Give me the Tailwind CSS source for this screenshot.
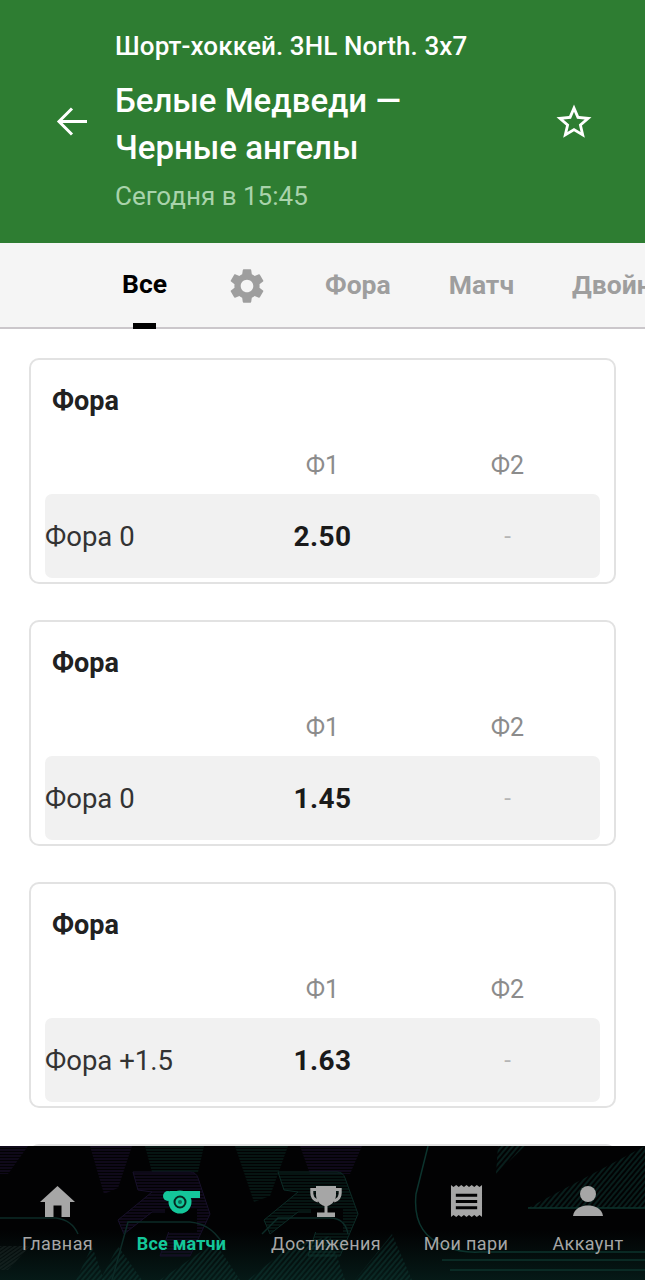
<!DOCTYPE html>
<html lang="ru">
<head>
<meta charset="UTF-8" />
<meta name="viewport" content="width=device-width, initial-scale=1.0" />
<title>Белые Медведи — Черные ангелы</title>
<script src="https://cdn.jsdelivr.net/npm/@tailwindcss/browser@4"></script>
</head>
<body class="bg-white font-['Roboto',sans-serif]">
<div class="w-[645px] h-[1280px] flex flex-col overflow-hidden">

  <!-- match header -->
  <header class="h-[243px] shrink-0 bg-[#2e7d32] flex items-center pl-[56px] pr-[50px]">
    <svg class="w-[31px] h-[29px] shrink-0" viewBox="0 0 31 29" fill="none" stroke="#fff" stroke-width="3"><path d="M31 14.500H3M16 1.500 3 14.500 16 27.500"/></svg>
    <div class="flex-1 pl-[28px] pb-[1px]">
      <div class="text-[26px] leading-[30px] font-medium text-white tracking-[0.1px]">Шорт-хоккей. 3HL North. 3x7</div>
      <div class="text-[33px] leading-[47px] font-medium text-white mt-[16px]">Белые Медведи —<br>Черные ангелы</div>
      <div class="text-[26px] leading-[30px] text-[#a9d3ab] mt-[10px]">Сегодня в 15:45</div>
    </div>
    <svg class="w-[42px] h-[42px] shrink-0" viewBox="0 0 24 24" fill="#fff"><path d="M22 9.240l-7.190-.62L12 2 9.190 8.630 2 9.240l5.460 4.730L5.820 21 12 17.270 18.180 21l-1.630-7.030L22 9.240zM12 15.400l-3.760 2.270 1-4.280-3.320-2.880 4.380-.38L12 6.100l1.710 4.040 4.380.38-3.320 2.880 1 4.280L12 15.400z"/></svg>
  </header>

  <!-- tabs -->
  <nav class="h-[86px] shrink-0 bg-[#f5f5f5] shadow-[inset_0_-2px_0_#cbc7cb] flex items-center pl-[122px] overflow-hidden whitespace-nowrap text-[26.5px] font-bold text-[#9e9e9e]">
    <div class="relative h-full flex items-center w-[46px] shrink-0 pb-[4px]">
      <span class="text-black">Все</span>
      <span class="absolute left-[11px] bottom-0 w-[23px] h-[6px] bg-black"></span>
    </div>
    <svg class="w-[42px] h-[42px] ml-[57.5px] shrink-0" viewBox="0 0 24 24" fill="#9e9e9e"><path d="M19.140 12.940c.04-.3.06-.61.06-.94 0-.32-.02-.64-.07-.94l2.030-1.580a.49.49 0 0 0 .12-.61l-1.920-3.320a.488.488 0 0 0-.59-.22l-2.390.96c-.5-.38-1.030-.7-1.620-.94l-.36-2.540a.484.484 0 0 0-.48-.41h-3.840c-.24 0-.43.17-.47.41l-.36 2.540c-.59.24-1.130.57-1.620.94l-2.390-.96c-.22-.08-.47 0-.59.22L2.740 8.870c-.12.21-.08.47.12.61l2.030 1.580c-.05.3-.09.63-.09.94s.02.64.07.94l-2.030 1.580a.49.49 0 0 0-.12.61l1.920 3.320c.12.22.37.29.59.22l2.390-.96c.5.38 1.030.7 1.620.94l.36 2.540c.05.24.24.41.48.41h3.840c.24 0 .44-.17.47-.41l.36-2.540c.59-.24 1.130-.56 1.620-.94l2.390.96c.22.08.47 0 .59-.22l1.920-3.320c.12-.22.07-.47-.12-.61l-2.010-1.580zM12 15.600c-1.980 0-3.600-1.620-3.600-3.600s1.620-3.600 3.600-3.600 3.600 1.620 3.600 3.600-1.620 3.600-3.600 3.600z"/></svg>
    <span class="ml-[57.5px] pb-[3px]">Фора</span>
    <span class="ml-[58px] pb-[3px]">Матч</span>
    <span class="ml-[58px] pb-[3px]">Двойной шанс</span>
  </nav>

  <!-- markets -->
  <main class="flex-1 overflow-hidden px-[29px] pt-[29px] flex flex-col gap-[36.5px]">
    <section class="shrink-0 h-[225.5px] border-2 border-[#e2e2e2] rounded-[10px] px-[14px] pt-[25px]">
      <h2 class="pl-[7px] text-[27px] leading-[32px] font-bold text-[#212121]">Фора</h2>
      <div class="grid grid-cols-[185px_185px_185px] mt-[30px] h-[32px] items-center text-[25px] text-[#8c8c8c] text-center"><span></span><span>Ф1</span><span>Ф2</span></div>
      <div class="grid grid-cols-[185px_185px_185px] mt-[15px] h-[84px] items-center bg-[#f1f1f1] rounded-[7px] text-center">
        <span class="text-left text-[27.5px] text-[#333] pt-[1px]">Фора 0</span>
        <span class="text-[28px] font-bold text-[#1a1a1a] tracking-[0.4px] pt-[1px]">2.50</span>
        <span class="text-[24px] text-[#b5b5b5]">-</span>
      </div>
    </section>
    <section class="shrink-0 h-[225.5px] border-2 border-[#e2e2e2] rounded-[10px] px-[14px] pt-[25px]">
      <h2 class="pl-[7px] text-[27px] leading-[32px] font-bold text-[#212121]">Фора</h2>
      <div class="grid grid-cols-[185px_185px_185px] mt-[30px] h-[32px] items-center text-[25px] text-[#8c8c8c] text-center"><span></span><span>Ф1</span><span>Ф2</span></div>
      <div class="grid grid-cols-[185px_185px_185px] mt-[15px] h-[84px] items-center bg-[#f1f1f1] rounded-[7px] text-center">
        <span class="text-left text-[27.5px] text-[#333] pt-[1px]">Фора 0</span>
        <span class="text-[28px] font-bold text-[#1a1a1a] tracking-[0.4px] pt-[1px]">1.45</span>
        <span class="text-[24px] text-[#b5b5b5]">-</span>
      </div>
    </section>
    <section class="shrink-0 h-[225.5px] border-2 border-[#e2e2e2] rounded-[10px] px-[14px] pt-[25px]">
      <h2 class="pl-[7px] text-[27px] leading-[32px] font-bold text-[#212121]">Фора</h2>
      <div class="grid grid-cols-[185px_185px_185px] mt-[30px] h-[32px] items-center text-[25px] text-[#8c8c8c] text-center"><span></span><span>Ф1</span><span>Ф2</span></div>
      <div class="grid grid-cols-[185px_185px_185px] mt-[15px] h-[84px] items-center bg-[#f1f1f1] rounded-[7px] text-center">
        <span class="text-left text-[27.5px] text-[#333] pt-[1px]">Фора +1.5</span>
        <span class="text-[28px] font-bold text-[#1a1a1a] tracking-[0.4px] pt-[1px]">1.63</span>
        <span class="text-[24px] text-[#b5b5b5]">-</span>
      </div>
    </section>
    <section class="shrink-0 h-[225.5px] border-2 border-[#e2e2e2] rounded-[10px]"></section>
  </main>

  <!-- bottom nav -->
  <footer class="relative h-[134px] shrink-0 bg-[#020203] overflow-hidden">
    <!-- faint decorative shapes behind the tabs -->
    <svg class="absolute inset-0" width="645" height="134" viewBox="0 0 645 134" fill="none">
      <defs>
        <pattern id="hatchP" width="3" height="3" patternUnits="userSpaceOnUse"><path d="M0 1H3" stroke="#1b1030" stroke-width="1"/></pattern>
        <pattern id="hatchG" width="3" height="3" patternUnits="userSpaceOnUse"><path d="M0 1H3" stroke="#0a2722" stroke-width="1"/></pattern>
        <pattern id="hatchD" width="4" height="4" patternUnits="userSpaceOnUse" patternTransform="rotate(-50)"><path d="M0 1H4" stroke="#0d3a33" stroke-width="1"/></pattern>
        <pattern id="hatchM" width="3" height="3" patternUnits="userSpaceOnUse" patternTransform="rotate(-35)"><path d="M0 1H3" stroke="#1f2b2a" stroke-width="1"/></pattern>
        <linearGradient id="glow" x1="0" y1="0" x2="0" y2="1"><stop offset="0" stop-color="#0b3c34" stop-opacity="0"/><stop offset="1" stop-color="#0b3c34" stop-opacity=".4"/></linearGradient>
      </defs>
      <rect y="84" width="645" height="50" fill="url(#glow)"/>
      <!-- top hatched bands -->
      <path d="M0 0H28L8 28H0Z" fill="url(#hatchP)"/>
      <path d="M90 0H132L118 42 104 48Z" fill="url(#hatchP)"/>
      <path d="M145 0H204L198 26H152Z" fill="url(#hatchG)"/>
      <path d="M235 0H288L270 50 254 56Z" fill="url(#hatchG)"/>
      <path d="M300 0H362L350 28H310Z" fill="url(#hatchP)"/>
      <path d="M498 0H525L496 28Z" fill="url(#hatchD)"/>
      <!-- "7" outlines -->
      <path d="M133 26H190Q196 26 198 32L210 68 190 110H160L176 66H152L124 88 118 74 152 46 138 44Z" fill="url(#hatchP)" stroke="#17102a"/>
      <path d="M278 26H337Q343 26 345 32L358 68 340 110H308L322 66H298L270 88 264 74 298 46 284 44Z" fill="url(#hatchG)" stroke="#0c2b26"/>
      <rect x="165" y="62" width="32" height="24" fill="#020203"/>
      <rect x="311" y="62" width="32" height="24" fill="#020203"/>
      <!-- bottom diagonal hatch -->
      <path d="M0 100H30L8 124H0Z" fill="url(#hatchM)"/>
      <path d="M76 134 92 100 104 134Z" fill="url(#hatchD)"/>
      <path d="M118 100 142 134H100Z" fill="url(#hatchD)"/>
      <path d="M160 134 215 96 240 134Z" fill="url(#hatchD)"/>
      <path d="M248 134 290 100 330 90 345 134Z" fill="url(#hatchD)"/>
      <path d="M355 134 392 88 412 134Z" fill="url(#hatchD)"/>
      <path d="M528 62 645 0V62Z" fill="url(#hatchD)"/>
      <!-- outlines -->
      <path d="M0 72H56Q72 74 78 88M112 134 128 76H190Q214 78 226 104M262 88 278 72H330Q345 72 348 88" stroke="#0d2b27" stroke-width="1.500"/>
      <path d="M428 0 416 48Q412 88 445 100 460 107 480 106H645M442 114H645M450 124H645M528 62H645" stroke="#0c332d" stroke-width="1.500"/>
    </svg>
    <div class="relative grid grid-cols-[115px_133px_156px_124px_120px] h-full text-center text-[18px] leading-[22px] tracking-[0.4px] text-[#a6a6a6] pt-[38px]">
      <a class="flex flex-col items-center">
        <span class="h-[34px] flex items-center justify-center">
          <svg class="w-[35px] h-[31px]" viewBox="0 0 35 31" fill="#a6a6a6"><path d="M17.500 0 35 16h-5v15h-8.500V19.500h-8V31H5V16H0z"/></svg>
        </span>
        <span class="mt-[15px]">Главная</span>
      </a>
      <a class="flex flex-col items-center font-bold text-[#14c79a] tracking-[0.2px]">
        <span class="h-[34px] flex items-center justify-center">
          <svg class="w-[37px] h-[24px] mt-[2px]" viewBox="0 0 37 24"><circle cx="5" cy="6" r="5" fill="#14c79a"/><rect x="7" y="1" width="30" height="7" fill="#14c79a"/><circle cx="17" cy="12" r="11.500" fill="#14c79a"/><circle cx="17" cy="12" r="5.500" fill="#14c79a" stroke="#06281f" stroke-width="2"/><circle cx="17" cy="12" r="2" fill="#0a6e58"/></svg>
        </span>
        <span class="mt-[15px]">Все матчи</span>
      </a>
      <a class="flex flex-col items-center">
        <span class="h-[34px] flex items-center justify-center">
          <svg class="w-[32px] h-[32px]" viewBox="0 0 32 32" fill="#a6a6a6"><path d="M6 1h20v9c0 5-4 10-8.500 11v6.500H25V32H7v-4.500h7.500V21C10 20 6 15 6 10z"/><path d="M6 4.500H1.800V8c0 4 2.700 7 6.200 8M26 4.500h4.200V8c0 4-2.700 7-6.200 8" fill="none" stroke="#a6a6a6" stroke-width="3"/></svg>
        </span>
        <span class="mt-[15px]">Достижения</span>
      </a>
      <a class="flex flex-col items-center">
        <span class="h-[34px] flex items-center justify-center">
          <svg class="w-[33px] h-[34px]" viewBox="0 0 34 35" fill="#a6a6a6"><path fill-rule="evenodd" d="M1 1l2.600 2L6.400 1l2.600 2 2.600-2 2.800 2L17 1l2.600 2 2.800-2L25 3l2.600-2 2.800 2L33 1v33l-2.600-2-2.800 2-2.600-2-2.600 2-2.800-2-2.600 2-2.600-2-2.800 2L9 32l-2.600 2-2.800-2L1 34zM6 10v3h22v-3zm0 6.500v3h22v-3zm0 6.500v3h22v-3z"/></svg>
        </span>
        <span class="mt-[15px]">Мои пари</span>
      </a>
      <a class="flex flex-col items-center">
        <span class="h-[34px] flex items-center justify-center">
          <svg class="w-[30px] h-[30px]" viewBox="0 0 30 30" fill="#a6a6a6"><circle cx="15" cy="8" r="8"/><path d="M0 30C1 22 9 19.500 15 19.500S29 22 30 30z"/></svg>
        </span>
        <span class="mt-[15px]">Аккаунт</span>
      </a>
    </div>
  </footer>
</div>
</body>
</html>
